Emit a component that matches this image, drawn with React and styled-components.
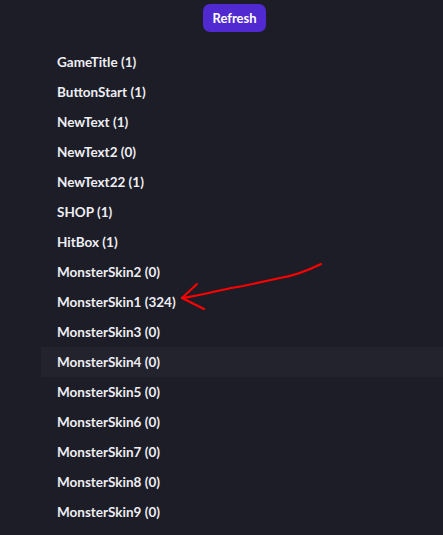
import React from "react";
import styled, { createGlobalStyle } from "styled-components";

const items = [
  ["GameTitle", 1],
  ["ButtonStart", 1],
  ["NewText", 1],
  ["NewText2", 0],
  ["NewText22", 1],
  ["SHOP", 1],
  ["HitBox", 1],
  ["MonsterSkin2", 0],
  ["MonsterSkin1", 324],
  ["MonsterSkin3", 0],
  ["MonsterSkin4", 0],
  ["MonsterSkin5", 0],
  ["MonsterSkin6", 0],
  ["MonsterSkin7", 0],
  ["MonsterSkin8", 0],
  ["MonsterSkin9", 0],
];

const App = () => {
  return (
    <>
      <Global />
      <Page>
        <Toolbar>
          <RefreshButton>Refresh</RefreshButton>
        </Toolbar>
        <List>
          {items.map(([name, count]) => (
            <Row key={name} $hover={name === "MonsterSkin4"}>
              {name} ({count})
            </Row>
          ))}
        </List>
        {/* hand drawn annotation */}
        <Arrow width="443" height="535" viewBox="0 0 443 535">
          <path
            d="M321 264 C305 272 292 276 280 278 C262 282 252 284 243 286 C230 288 222 290 213 292 C200 295 190 297 182 298"
            fill="none"
            stroke="#f00"
            strokeWidth="2"
            strokeLinecap="round"
          />
          <path
            d="M197 284 L182 298 L204 309"
            fill="none"
            stroke="#f00"
            strokeWidth="2"
            strokeLinecap="round"
            strokeLinejoin="round"
          />
        </Arrow>
      </Page>
    </>
  );
};

const Global = createGlobalStyle`
  html, body {
    margin: 0;
    padding: 0;
    background: #1c1d26;
  }
`;

const Page = styled.div`
  position: relative;
  width: 443px;
  height: 535px;
  overflow: hidden;
  background: #1c1d26;
  font-family: "Lato", "Liberation Sans", sans-serif;
`;

const Toolbar = styled.div`
  display: flex;
  justify-content: center;
  padding: 4px 0 0 26px;
`;

const RefreshButton = styled.button`
  width: 63px;
  height: 28px;
  border: none;
  border-radius: 7px;
  background: #5029d1;
  color: #fff;
  font-family: inherit;
  font-weight: 700;
  font-size: 13px;
  padding: 0;
`;

const List = styled.div`
  display: flex;
  flex-direction: column;
  margin: 15px 0 0 41px;
`;

const Row = styled.div`
  height: 30px;
  display: flex;
  align-items: center;
  padding-left: 16px;
  color: #eeeef4;
  font-size: 13.5px;
  font-weight: 700;
  background: ${(p) => (p.$hover ? "#22232c" : "transparent")};
`;

const Arrow = styled.svg`
  position: absolute;
  left: 0;
  top: 0;
  pointer-events: none;
`;

export default App;
